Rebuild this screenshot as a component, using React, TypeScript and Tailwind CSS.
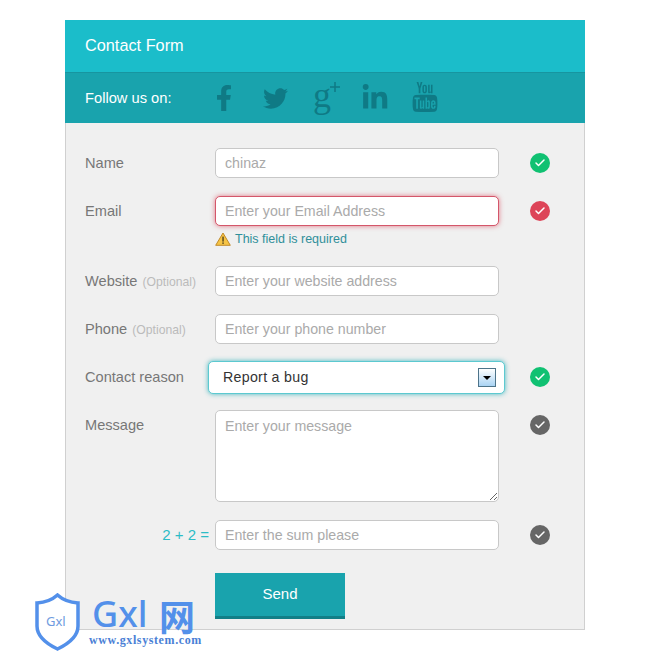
import type { ReactNode } from 'react'
import { FaFacebookF, FaTwitter, FaLinkedinIn } from 'react-icons/fa'
import { TfiYoutube } from 'react-icons/tfi'
import { Check } from 'lucide-react'

const inputClass =
  'block w-[284px] h-[30px] px-[9px] bg-white border border-[#c8c8c8] rounded-[5px] text-[14.2px] text-[#aaaaaa] placeholder:text-[#aaaaaa] outline-none'

function Status({ color }: { color: string }) {
  return (
    <span className={`ml-[31px] mt-[5px] w-5 h-5 rounded-full flex items-center justify-center text-white ${color}`}>
      <Check size={12} strokeWidth={3} />
    </span>
  )
}

function Row({ label, status, children }: { label: ReactNode; status?: string; children: ReactNode }) {
  return (
    <div className="flex items-start mb-[18px]">
      <label className="w-[130px] pt-[5px] text-[14.6px] leading-5 text-[#777777] whitespace-nowrap">{label}</label>
      <div className="w-[284px]">{children}</div>
      {status && <Status color={status} />}
    </div>
  )
}

function Optional({ text }: { text: string }) {
  return (
    <>
      {text} <span className="ml-px text-[12.2px] text-[#bbbbbb]">(Optional)</span>
    </>
  )
}

function WarningIcon() {
  return (
    <svg width="16" height="14" viewBox="0 0 16 14" className="shrink-0">
      <path d="M8 1 L15.3 13.3 H0.7 Z" fill="#f6c445" stroke="#c08a2a" strokeLinejoin="round" />
      <rect x="7.3" y="4.6" width="1.5" height="5" fill="#5b4a20" />
      <rect x="7.3" y="10.4" width="1.5" height="1.5" fill="#5b4a20" />
    </svg>
  )
}

function Watermark() {
  return (
    <div className="absolute left-[35px] top-[593px] w-[170px] h-[60px] text-[#5390ea]">
      <svg width="45" height="58" viewBox="0 0 45 58" className="absolute left-0 top-0">
        <path
          d="M22.5 2 C17 7 9 9.500 2 10 V33 C2 44 12 51 22.500 56 C33 51 43 44 43 33 V10 C36 9.500 28 7 22.500 2 Z"
          fill="#ffffff"
          stroke="#5390ea"
          strokeWidth="3.500"
        />
      </svg>
      <span className="absolute left-[11px] top-[20px] text-[13px] leading-4 font-['Noto_Sans',sans-serif] text-[#6f9be0]">Gxl</span>
      <span className="absolute left-[57px] top-[1px] text-[36px] leading-[40px] font-['Noto_Sans',sans-serif] font-medium">Gxl</span>
      <span className="absolute left-[124px] top-[3px] text-[36px] leading-[38px] font-bold font-['Noto_Sans_CJK_SC',sans-serif]">网</span>
      <span className="absolute left-[54px] top-[41px] text-[12px] leading-3 font-bold tracking-[0.6px] font-['Liberation_Serif',serif] text-[#4a7fd6]">
        www.gxlsystem.com
      </span>
    </div>
  )
}

export default function App() {
  return (
    <div className="relative h-[653px] bg-white overflow-hidden font-['Liberation_Sans',Arial,sans-serif]">
      <div className="ml-[65px] pt-5 w-[520px]">
        <div className="h-[52px] px-5 pb-[2px] bg-[#1bbdca] flex items-center text-white text-[16.3px]">Contact Form</div>
        <div className="h-[51px] pl-5 bg-[#19a3ad] border-t border-[#1795a0] flex items-center text-[#ffffff]">
          <span className="w-[130px] text-[14.7px]">Follow us on:</span>
          <div className="flex items-center text-[#0f7a85]">
            <FaFacebookF className="text-[26px] ml-[-4px]" />
            <FaTwitter className="text-[25px] ml-[26px]" />
            <span className="ml-[25px] flex items-start w-[28px] h-[36px] font-['Liberation_Serif',serif] text-[36px] leading-[30px]">
              g
              <svg width="10" height="10" viewBox="0 0 10 10" className="-ml-[1px] mt-[2px] shrink-0">
                <path d="M5 0 V10 M0 5 H10" stroke="#0f7a85" strokeWidth="1.500" />
              </svg>
            </span>
            <FaLinkedinIn className="text-[28px] ml-[20px]" />
            <TfiYoutube className="text-[30px] ml-[21px] -mt-[3px]" />
          </div>
        </div>
        <form className="h-[507px] pt-[25px] pl-[19px] bg-[#f0f0f0] border-x border-b border-[#d0d0d0]">
          <Row label="Name" status="bg-[#10c172]">
            <input className={inputClass} defaultValue="chinaz" />
          </Row>
          <Row label="Email" status="bg-[#dd4458]">
            <input
              className={`${inputClass} border-[#d4566a] shadow-[0_0_5px_rgba(221,68,88,0.7)]`}
              placeholder="Enter your Email Address"
            />
            <p className="mt-[5px] mb-px h-[16px] flex items-center gap-[4px] text-[12.5px] text-[#2f8f9a]">
              <WarningIcon />
              This field is required
            </p>
          </Row>
          <Row label={<Optional text="Website" />}>
            <input className={inputClass} placeholder="Enter your website address" />
          </Row>
          <Row label={<Optional text="Phone" />}>
            <input className={inputClass} placeholder="Enter your phone number" />
          </Row>
          <Row label="Contact reason" status="bg-[#10c172]">
            <div className="relative -mx-[7px] -mt-px -mb-[2px]">
              <select className="block w-[297px] h-[33px] pl-[14px] appearance-none bg-white border border-[#5cc9d0] rounded-[5px] shadow-[0_0_5px_rgba(27,170,180,0.8)] text-[14.2px] tracking-[0.3px] text-[#333333] outline-none">
                <option>Report a bug</option>
              </select>
              <span className="absolute right-[10px] top-[7px] w-[18px] h-[19px] flex items-center justify-center border border-[#4d7389] bg-linear-to-b from-white to-[#a9d3f3]">
                <span className="w-0 h-0 border-x-[4px] border-x-transparent border-t-[4px] border-t-black" />
              </span>
            </div>
          </Row>
          <Row label="Message" status="bg-[#666666]">
            <textarea className={`${inputClass} h-[92px] pt-[5px]`} placeholder="Enter your message" />
          </Row>
          <Row
            label={<span className="block w-[124px] text-right text-[#2cbcc6] text-[15px]">2 + 2 =</span>}
            status="bg-[#666666]"
          >
            <input className={inputClass} placeholder="Enter the sum please" />
          </Row>
          <button
            type="button"
            className="block ml-[130px] mt-[23px] w-[130px] h-[46px] bg-[#19a3ad] border-b-[3px] border-[#127f87] text-white text-[15px]"
          >
            Send
          </button>
        </form>
      </div>
      <Watermark />
    </div>
  )
}
